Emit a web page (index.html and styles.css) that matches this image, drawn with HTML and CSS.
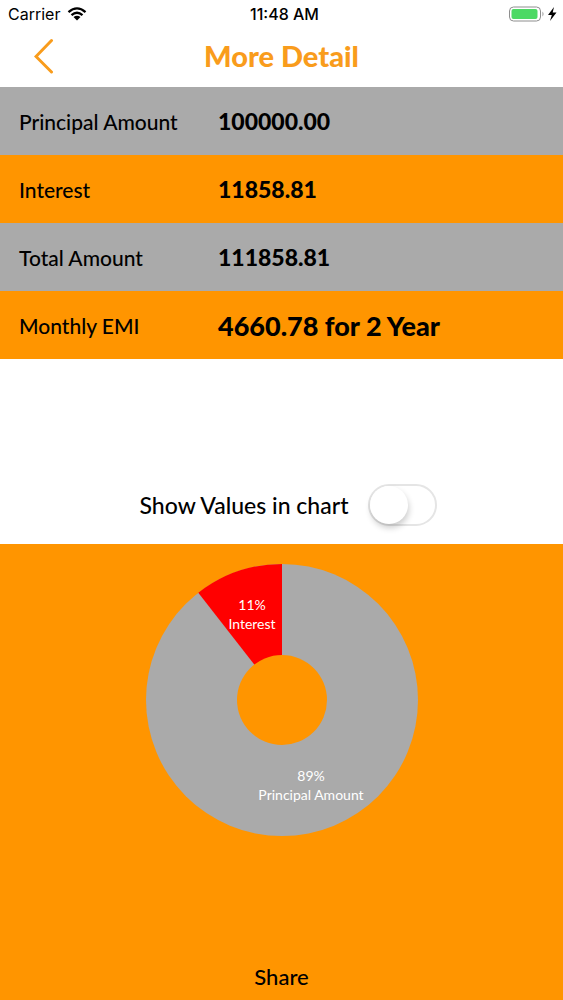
FILE: index.html
```html
<!DOCTYPE html>
<html lang="en">
<head>
    <meta charset="UTF-8">
    <meta name="viewport" content="width=device-width, initial-scale=1.0">
    <title>More Detail</title>
    <link rel="stylesheet" href="styles.css">
</head>
<body>
    <!-- Status bar -->
    <div class="status-bar">
        <div class="carrier">
            <span>Carrier</span>
            <svg width="20" height="14" viewBox="0 0 20 14">
                <path d="M1.5 5.2Q10-2.4 18.5 5.2M4.5 8.1Q10 3.3 15.5 8.1" fill="none" stroke="#000" stroke-width="2.3"/>
                <path d="M6.5 10.1Q10 7.2 13.5 10.1L10 13.6Z"/>
            </svg>
        </div>
        <div class="time">11:48 AM</div>
        <div class="battery">
            <svg width="48" height="16" viewBox="0 0 48 16">
                <rect x="0.5" y="1" width="31" height="14" rx="4" fill="#fff" stroke="#8e8e8e"/>
                <rect x="2.5" y="3" width="26" height="10" rx="2" fill="#4cd964"/>
                <path d="M33.500 5.500q2 2.500 0 5z" fill="#8e8e8e"/>
                <path d="M45 1L39 9H42.800l-1.800 6L47.500 6.600H43.700z"/>
            </svg>
        </div>
    </div>

    <!-- Header -->
    <header class="nav-bar">
        <button class="back-button" type="button" aria-label="Back">
            <svg width="20" height="36" viewBox="0 0 20 36">
                <path d="M17.500 2.500L2 18.500L17.500 34" fill="none" stroke="#f99c1c" stroke-width="3" stroke-linecap="round"/>
            </svg>
        </button>
        <h1>More Detail</h1>
    </header>

    <main>
        <table class="summary">
            <tr>
                <th scope="row">Principal Amount</th>
                <td>100000.00</td>
            </tr>
            <tr>
                <th scope="row">Interest</th>
                <td>11858.81</td>
            </tr>
            <tr>
                <th scope="row">Total Amount</th>
                <td>111858.81</td>
            </tr>
            <tr>
                <th scope="row">Monthly EMI</th>
                <td class="emi">4660.78 for 2 Year</td>
            </tr>
        </table>

        <div class="chart-option">
            <label for="showValues">Show Values in chart</label>
            <input class="switch" type="checkbox" role="switch" id="showValues">
        </div>

        <section class="chart-panel">
            <!-- Donut chart -->
            <svg class="chart" viewBox="0 0 272 272" role="img" aria-label="Principal amount and interest">
                <circle cx="136" cy="136" r="136" fill="#aaa"/>
                <path d="M136 136V0A136 136 0 0 0 52.300 28.800Z" fill="#f00"/>
                <circle cx="136" cy="136" r="45" fill="#ff9500"/>
                <g class="chart-text">
                    <text x="106" y="46">11%</text>
                    <text x="106" y="65">Interest</text>
                    <text x="165" y="217">89%</text>
                    <text x="165" y="236">Principal Amount</text>
                </g>
            </svg>
            <button class="share-button" type="button">Share</button>
        </section>
    </main>
</body>
</html>
```
FILE: styles.css
```css
* {
    box-sizing: border-box;
}

body {
    margin: 0;
    min-height: 100vh;
    display: flex;
    flex-direction: column;
    font-family: Lato, "Liberation Sans", sans-serif;
    font-size: 22px;
    font-weight: 500;
    background-color: #fff;
    color: #000;
}

button {
    border: none;
    background: none;
    padding: 0;
    color: inherit;
    font: inherit;
    cursor: pointer;
}

/* Status bar */
.status-bar {
    display: grid;
    grid-template-columns: 1fr auto 1fr;
    align-items: center;
    height: 28px;
    padding: 0 6px 0 8px;
    font-family: Inter, "Liberation Sans", sans-serif;
    font-size: 16px;
    font-weight: 400;
}

.carrier {
    display: flex;
    align-items: center;
    gap: 7px;
}

.time {
    padding-left: 4px;
    font-weight: 500;
}

.battery {
    display: flex;
    justify-content: flex-end;
}

/* Header */
.nav-bar {
    display: grid;
    grid-template-columns: 54px 1fr 54px;
    align-items: center;
    height: 59px;
    padding-bottom: 4px;
    color: #f99c1c;
}

.back-button {
    display: flex;
    justify-content: flex-end;
}

.nav-bar h1 {
    margin: 0;
    text-align: center;
    font-size: 29px;
    line-height: 36px;
    font-weight: 900;
}

main {
    flex: 1;
    display: flex;
    flex-direction: column;
}

/* Loan summary */
.summary {
    width: 100%;
    border-collapse: collapse;
}

.summary tr {
    height: 68px;
    background-color: #ff9500;
}

.summary tr:nth-child(odd) {
    background-color: #aaa;
}

.summary th {
    width: 218px;
    padding: 0 0 0 19px;
    text-align: left;
    font-size: 21px;
    font-weight: 500;
}

.summary td {
    padding: 0;
    font-size: 23px;
    font-weight: 900;
}

.summary .emi {
    font-size: 27px;
}

/* Switch */
.chart-option {
    display: flex;
    justify-content: center;
    align-items: center;
    gap: 20px;
    padding: 125px 0 18px 14px;
    font-size: 23px;
}

.switch {
    appearance: none;
    width: 69px;
    height: 42px;
    margin: 0;
    border: 2px solid #e5e5e5;
    border-radius: 21px;
    background-color: #fff;
    cursor: pointer;
}

.switch::before {
    content: "";
    display: block;
    width: 38px;
    height: 38px;
    border-radius: 50%;
    background-color: #fff;
    box-shadow: 1px 4px 6px rgba(0, 0, 0, 0.2);
}

.switch:checked {
    background-color: #4cd964;
    border-color: #4cd964;
}

.switch:checked::before {
    margin-left: auto;
}

/* Chart */
.chart-panel {
    flex: 1;
    display: flex;
    flex-direction: column;
    align-items: center;
    justify-content: space-between;
    padding: 20px 0 10px;
    background-color: #ff9500;
}

.chart {
    width: 272px;
}

.chart-text {
    fill: #fff;
    font-size: 14px;
    font-weight: 400;
    text-anchor: middle;
}
```
